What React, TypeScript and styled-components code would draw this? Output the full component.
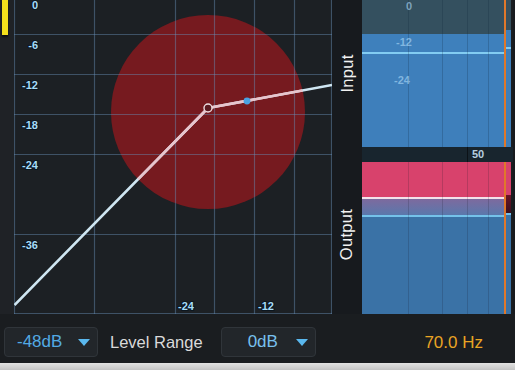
import React from "react";
import styled, { createGlobalStyle } from "styled-components";

const Global = createGlobalStyle`
  html, body { margin: 0; padding: 0; background: #1a1d20; }
  body { font-family: "Liberation Sans", Arial, sans-serif; }
`;

const Root = styled.div`
  width: 515px;
  height: 370px;
  display: flex;
  flex-direction: column;
  background: #1a1d20;
  overflow: hidden;
`;

const Main = styled.div`
  height: 314px;
  display: flex;
  flex-direction: row;
`;

const LeftStrip = styled.div`
  width: 14px;
  background: #1f2226;
  display: flex;
  flex-direction: column;
  padding-left: 2px;
  box-sizing: border-box;
`;

const LevelBar = styled.div`
  width: 6px;
  height: 35px;
  background: #f4e01c;
  box-shadow: 0 2px 2px rgba(0, 0, 0, 0.6);
`;

const GraphBox = styled.div`
  width: 318px;
  height: 314px;
  background: #1c2024;
`;

const RightPanel = styled.div`
  flex: 1;
  display: flex;
  flex-direction: column;
  background: #171a1e;
`;

const MeterRow = styled.div<{ $h: number }>`
  height: ${(p) => p.$h}px;
  display: flex;
  flex-direction: row;
`;

const SideLabel = styled.div<{ $shift?: number }>`
  width: 30px;
  display: flex;
  align-items: center;
  justify-content: center;
  padding-bottom: ${(p) => p.$shift ?? 0}px;
  box-sizing: border-box;
`;

const Rotated = styled.span`
  transform: rotate(-90deg);
  color: #f2f2f2;
  font-size: 16.5px;
  letter-spacing: 0.3px;
  white-space: nowrap;
`;

const Meter = styled.div`
  width: 151px;
  display: flex;
  flex-direction: row;
  position: relative;
`;

const MeterBody = styled.div`
  width: 142px;
  display: flex;
  flex-direction: column;
`;

const MeterTail = styled.div`
  flex: 1;
  display: flex;
  flex-direction: column;
`;

const Marker = styled.div`
  width: 2px;
  background: #e0782a;
`;

const EdgeStrip = styled.div`
  width: 2px;
  background: #1a1d20;
`;

const Seg = styled.div<{ $h?: number; $bg: string }>`
  ${(p) => (p.$h !== undefined ? `height: ${p.$h}px;` : "flex: 1;")}
  background: ${(p) => p.$bg};
`;

const GridLine = styled.div<{ $x: number; $c: string }>`
  position: absolute;
  top: 0;
  bottom: 0;
  left: ${(p) => p.$x}px;
  width: 1px;
  background: ${(p) => p.$c};
  pointer-events: none;
`;

const MeterLabel = styled.span<{ $x: number; $y: number }>`
  position: absolute;
  left: ${(p) => p.$x}px;
  top: ${(p) => p.$y}px;
  font-size: 11px;
  font-weight: bold;
  color: rgba(175, 220, 250, 0.6);
  line-height: 1;
`;

const ScaleStrip = styled.div`
  width: 151px;
  background: #18252e;
  position: relative;
`;

const ScaleLabel = styled.span`
  position: absolute;
  left: 110px;
  top: 2px;
  font-size: 11px;
  font-weight: bold;
  color: #b6cfe0;
  line-height: 1;
`;

const BottomBar = styled.div`
  height: 49px;
  display: flex;
  flex-direction: row;
  align-items: flex-start;
  padding: 13px 32px 0 4px;
  box-sizing: border-box;
  background: #1a1d20;
`;

const Dropdown = styled.div<{ $w: number; $pl: number }>`
  width: ${(p) => p.$w}px;
  height: 30px;
  box-sizing: border-box;
  display: flex;
  align-items: center;
  padding-left: ${(p) => p.$pl}px;
  padding-right: 7px;
  background: #22262a;
  border: 1px solid #30353a;
  border-radius: 4px;
`;

const DropText = styled.span<{ $c: string }>`
  color: ${(p) => p.$c};
  font-size: 17px;
`;

const Tri = styled.span`
  margin-left: auto;
  width: 0;
  height: 0;
  border-left: 6px solid transparent;
  border-right: 6px solid transparent;
  border-top: 7px solid #5ab8ee;
`;

const Caption = styled.span`
  color: #dadada;
  font-size: 16.5px;
  margin: 6px 18px 0 12px;
`;

const Freq = styled.span`
  margin-left: auto;
  color: #e9a424;
  font-size: 17px;
  margin-top: 6px;
`;

const BottomEdge = styled.div`
  flex: 1;
  background: linear-gradient(#e2e2e2, #c4c4c4);
`;

const vLines = [0, 80, 161, 200, 240, 280, 318];
const hLines = [34, 74, 114, 154, 234, 313];
const yLabels: [string, number][] = [
  ["0", 9],
  ["-6", 49],
  ["-12", 89],
  ["-18", 129],
  ["-24", 169],
  ["-36", 249],
];

const lineD = "M0.5 305 L194 108 L318 85";

const Graph: React.FC = () => (
  <svg width="318" height="314" viewBox="0 0 318 314">
    <defs>
      <clipPath id="zone">
        <circle cx="194" cy="112" r="97" />
      </clipPath>
    </defs>
    <circle cx="194" cy="112" r="97" fill="#761a1f" />
    {vLines.map((x) => (
      <line
        key={"v" + x}
        x1={x === 0 ? 0.5 : x === 318 ? 317.5 : x + 0.5}
        x2={x === 0 ? 0.5 : x === 318 ? 317.5 : x + 0.5}
        y1={0}
        y2={314}
        stroke="rgba(105,145,185,0.45)"
        strokeWidth={1.2}
      />
    ))}
    {hLines.map((y) => (
      <line
        key={"h" + y}
        x1={0}
        x2={318}
        y1={y + 0.5}
        y2={y + 0.5}
        stroke="rgba(105,145,185,0.45)"
        strokeWidth={1.2}
      />
    ))}
    <g
      fontFamily="Liberation Sans, Arial, sans-serif"
      fontWeight="bold"
      fontSize="11"
      fill="#a6dcf8"
      stroke="#0b1620"
      strokeWidth="2"
      paintOrder="stroke"
    >
      {yLabels.map(([t, y]) => (
        <text key={t} x={24} y={y} textAnchor="end">
          {t}
        </text>
      ))}
      <text x={164} y={310}>-24</text>
      <text x={244} y={310}>-12</text>
    </g>
    <path d={lineD} fill="none" stroke="#cfe6f2" strokeWidth="2.6" strokeLinejoin="round" />
    <path
      d={lineD}
      fill="none"
      stroke="#e8c4cc"
      strokeWidth="2.6"
      strokeLinejoin="round"
      clipPath="url(#zone)"
    />
    <circle cx="194" cy="108" r="4" fill="#5a1a20" stroke="#ecdde0" strokeWidth="1.4" />
    <circle cx="233" cy="101" r="3.4" fill="#4aa2e2" />
  </svg>
);

const meterLines = [46, 80, 105, 126];

const App: React.FC = () => (
  <Root>
    <Global />
    <Main>
      <LeftStrip>
        <LevelBar />
      </LeftStrip>
      <GraphBox>
        <Graph />
      </GraphBox>
      <RightPanel>
        <MeterRow $h={147}>
          <SideLabel>
            <Rotated>Input</Rotated>
          </SideLabel>
          <Meter>
            <MeterBody>
              <Seg $h={34} $bg="#34505f" />
              <Seg $h={18} $bg="#3e80bc" />
              <Seg $h={2} $bg="#82ccf2" />
              <Seg $bg="#3e7fbb" />
            </MeterBody>
            <Marker />
            <MeterTail>
              <Seg $h={30} $bg="#35505e" />
              <Seg $h={17} $bg="#3e80bc" />
              <Seg $h={2} $bg="#82ccf2" />
              <Seg $bg="#3e7fbb" />
            </MeterTail>
            <EdgeStrip />
            {meterLines.map((x) => (
              <GridLine key={x} $x={x} $c="rgba(10,30,50,0.2)" />
            ))}
            <MeterLabel $x={44} $y={1}>0</MeterLabel>
            <MeterLabel $x={34} $y={37}>-12</MeterLabel>
            <MeterLabel $x={32} $y={75}>-24</MeterLabel>
          </Meter>
        </MeterRow>
        <MeterRow $h={15}>
          <SideLabel />
          <ScaleStrip>
            <GridLine $x={105} $c="rgba(0,0,0,0.5)" />
            <ScaleLabel>50</ScaleLabel>
          </ScaleStrip>
        </MeterRow>
        <MeterRow $h={152}>
          <SideLabel $shift={8}>
            <Rotated>Output</Rotated>
          </SideLabel>
          <Meter>
            <MeterBody>
              <Seg $h={35} $bg="#d8426c" />
              <Seg $h={2} $bg="#f3e2ea" />
              <Seg $h={16} $bg="linear-gradient(#7d6a9e, #5a78ac)" />
              <Seg $h={2} $bg="#74c2ea" />
              <Seg $bg="#3a72a6" />
            </MeterBody>
            <Marker />
            <MeterTail>
              <Seg $h={33} $bg="#d8426c" />
              <Seg $h={18} $bg="linear-gradient(#6a1426, #3a1020)" />
              <Seg $h={2} $bg="#74c2ea" />
              <Seg $bg="#3a72a6" />
            </MeterTail>
            <EdgeStrip />
            {meterLines.map((x) => (
              <GridLine key={x} $x={x} $c="rgba(20,20,40,0.18)" />
            ))}
          </Meter>
        </MeterRow>
      </RightPanel>
    </Main>
    <BottomBar>
      <Dropdown $w={94} $pl={12}>
        <DropText $c="#52aae4">-48dB</DropText>
        <Tri />
      </Dropdown>
      <Caption>Level Range</Caption>
      <Dropdown $w={95} $pl={26}>
        <DropText $c="#78c0ee">0dB</DropText>
        <Tri />
      </Dropdown>
      <Freq>70.0 Hz</Freq>
    </BottomBar>
    <BottomEdge />
  </Root>
);

export default App;
